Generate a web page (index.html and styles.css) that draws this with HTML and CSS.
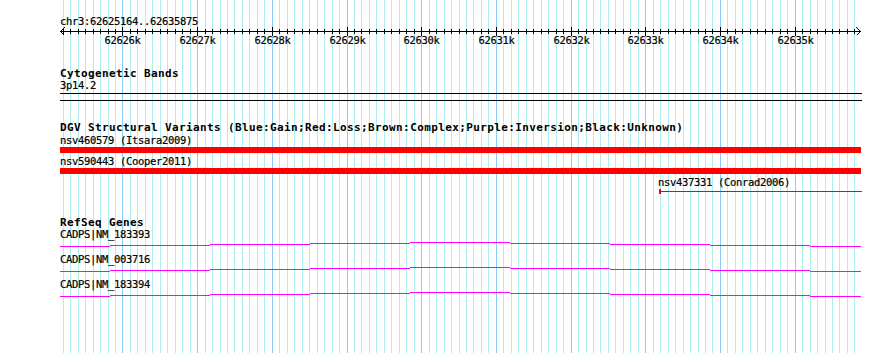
FILE: index.html
```html
<!DOCTYPE html>
<html>
<head>
<meta charset="utf-8">
<link rel="stylesheet" href="styles.css">
</head>
<body>
<div class="panel">
  <svg class="grid" width="890" height="353" shape-rendering="crispEdges">
    <path class="grid-minor" d="M63.5 0V353M70.5 0V353M78.5 0V353M85.5 0V353M93.5 0V353M100.5 0V353M108.5 0V353M115.5 0V353M130.5 0V353M137.5 0V353M145.5 0V353M152.5 0V353M160.5 0V353M167.5 0V353M175.5 0V353M182.5 0V353M190.5 0V353M205.5 0V353M212.5 0V353M220.5 0V353M227.5 0V353M234.5 0V353M242.5 0V353M249.5 0V353M257.5 0V353M264.5 0V353M279.5 0V353M287.5 0V353M294.5 0V353M302.5 0V353M309.5 0V353M317.5 0V353M324.5 0V353M332.5 0V353M339.5 0V353M354.5 0V353M361.5 0V353M369.5 0V353M376.5 0V353M384.5 0V353M391.5 0V353M399.5 0V353M406.5 0V353M414.5 0V353M429.5 0V353M436.5 0V353M444.5 0V353M451.5 0V353M459.5 0V353M466.5 0V353M473.5 0V353M481.5 0V353M488.5 0V353M503.5 0V353M511.5 0V353M518.5 0V353M526.5 0V353M533.5 0V353M541.5 0V353M548.5 0V353M556.5 0V353M563.5 0V353M578.5 0V353M586.5 0V353M593.5 0V353M600.5 0V353M608.5 0V353M615.5 0V353M623.5 0V353M630.5 0V353M638.5 0V353M653.5 0V353M660.5 0V353M668.5 0V353M675.5 0V353M683.5 0V353M690.5 0V353M698.5 0V353M705.5 0V353M712.5 0V353M727.5 0V353M735.5 0V353M742.5 0V353M750.5 0V353M757.5 0V353M765.5 0V353M772.5 0V353M780.5 0V353M787.5 0V353M802.5 0V353M810.5 0V353M817.5 0V353M825.5 0V353M832.5 0V353M839.5 0V353M847.5 0V353M854.5 0V353"/>
    <path class="grid-major" d="M122.5 0V353M197.5 0V353M272.5 0V353M347.5 0V353M421.5 0V353M496.5 0V353M571.5 0V353M645.5 0V353M720.5 0V353M795.5 0V353"/>
  </svg>

  <div class="tracks">
    <div class="label scale-label">chr3:62625164..62635875</div>

    <svg class="ruler" width="890" height="41">
      <g shape-rendering="crispEdges" stroke="#000" fill="none">
        <path d="M60 5.5H861"/>
        <path d="M63.5 3v5M70.5 3v5M78.5 3v5M85.5 3v5M93.5 3v5M100.5 3v5M108.5 3v5M115.5 3v5M130.5 3v5M137.5 3v5M145.5 3v5M152.5 3v5M160.5 3v5M167.5 3v5M175.5 3v5M182.5 3v5M190.5 3v5M205.5 3v5M212.5 3v5M220.5 3v5M227.5 3v5M234.5 3v5M242.5 3v5M249.5 3v5M257.5 3v5M264.5 3v5M279.5 3v5M287.5 3v5M294.5 3v5M302.5 3v5M309.5 3v5M317.5 3v5M324.5 3v5M332.5 3v5M339.5 3v5M354.5 3v5M361.5 3v5M369.5 3v5M376.5 3v5M384.5 3v5M391.5 3v5M399.5 3v5M406.5 3v5M414.5 3v5M429.5 3v5M436.5 3v5M444.5 3v5M451.5 3v5M459.5 3v5M466.5 3v5M473.5 3v5M481.5 3v5M488.5 3v5M503.5 3v5M511.5 3v5M518.5 3v5M526.5 3v5M533.5 3v5M541.5 3v5M548.5 3v5M556.5 3v5M563.5 3v5M578.5 3v5M586.5 3v5M593.5 3v5M600.5 3v5M608.5 3v5M615.5 3v5M623.5 3v5M630.5 3v5M638.5 3v5M653.5 3v5M660.5 3v5M668.5 3v5M675.5 3v5M683.5 3v5M690.5 3v5M698.5 3v5M705.5 3v5M712.5 3v5M727.5 3v5M735.5 3v5M742.5 3v5M750.5 3v5M757.5 3v5M765.5 3v5M772.5 3v5M780.5 3v5M787.5 3v5M802.5 3v5M810.5 3v5M817.5 3v5M825.5 3v5M832.5 3v5M839.5 3v5M847.5 3v5M854.5 3v5"/>
        <path d="M122.5 1v9M197.5 1v9M272.5 1v9M347.5 1v9M421.5 1v9M496.5 1v9M571.5 1v9M645.5 1v9M720.5 1v9M795.5 1v9"/>
        <path d="M64.5 1.5L60.5 5.5L64.5 9.5"/>
        <path d="M856.5 1.5L860.5 5.5L856.5 9.5"/>
      </g>
      <g class="ruler-labels" text-anchor="middle">
        <text x="122.5" y="17.5">62626k</text>
        <text x="197.5" y="17.5">62627k</text>
        <text x="272.5" y="17.5">62628k</text>
        <text x="347.5" y="17.5">62629k</text>
        <text x="421.5" y="17.5">62630k</text>
        <text x="496.5" y="17.5">62631k</text>
        <text x="571.5" y="17.5">62632k</text>
        <text x="645.5" y="17.5">62633k</text>
        <text x="720.5" y="17.5">62634k</text>
        <text x="795.5" y="17.5">62635k</text>
      </g>
    </svg>

    <div class="title cyto-title">Cytogenetic Bands</div>
    <div class="label">3p14.2</div>
    <div class="band"></div>

    <div class="title dgv-title">DGV Structural Variants (Blue:Gain;Red:Loss;Brown:Complex;Purple:Inversion;Black:Unknown)</div>
    <div class="label">nsv460579 (Itsara2009)</div>
    <div class="bar"></div>
    <div class="label gap">nsv590443 (Cooper2011)</div>
    <div class="bar"></div>
    <div class="label gap far">nsv437331 (Conrad2006)</div>
    <div class="thin"></div>

    <div class="title refseq-title">RefSeq Genes</div>
    <div class="gene">
      <div class="label">CADPS|NM_183393</div>
      <svg class="gene-line" width="890" height="12" shape-rendering="crispEdges">
        <rect x="60" y="5" width="50" height="1"/><rect x="110" y="4" width="100" height="1"/><rect x="210" y="3" width="100" height="1"/><rect x="310" y="2" width="100" height="1"/><rect x="410" y="1" width="100" height="1"/><rect x="510" y="2" width="100" height="1"/><rect x="610" y="3" width="100" height="1"/><rect x="710" y="4" width="100" height="1"/><rect x="810" y="5" width="51" height="1"/>
      </svg>
    </div>
    <div class="gene">
      <div class="label">CADPS|NM_003716</div>
      <svg class="gene-line" width="890" height="12" shape-rendering="crispEdges">
        <rect x="60" y="5" width="50" height="1"/><rect x="110" y="4" width="100" height="1"/><rect x="210" y="3" width="100" height="1"/><rect x="310" y="2" width="100" height="1"/><rect x="410" y="1" width="100" height="1"/><rect x="510" y="2" width="100" height="1"/><rect x="610" y="3" width="100" height="1"/><rect x="710" y="4" width="100" height="1"/><rect x="810" y="5" width="51" height="1"/>
      </svg>
    </div>
    <div class="gene">
      <div class="label">CADPS|NM_183394</div>
      <svg class="gene-line" width="890" height="12" shape-rendering="crispEdges">
        <rect x="60" y="5" width="50" height="1"/><rect x="110" y="4" width="100" height="1"/><rect x="210" y="3" width="100" height="1"/><rect x="310" y="2" width="100" height="1"/><rect x="410" y="1" width="100" height="1"/><rect x="510" y="2" width="100" height="1"/><rect x="610" y="3" width="100" height="1"/><rect x="710" y="4" width="100" height="1"/><rect x="810" y="5" width="51" height="1"/>
      </svg>
    </div>
  </div>
</div>
</body>
</html>
```

FILE: styles.css
```css
html, body {
  margin: 0;
  padding: 0;
  background: #ffffff;
}

.panel {
  position: relative;
  width: 890px;
  height: 353px;
  overflow: hidden;
  background: #ffffff;
  color: #000000;
  font-family: "DejaVu Sans Mono", "Liberation Mono", monospace;
}

.grid {
  position: absolute;
  left: 0;
  top: 0;
  display: block;
}

.grid-minor {
  stroke: #afeeee;
  stroke-width: 1;
}

.grid-major {
  stroke: #87cefa;
  stroke-width: 1;
}

.tracks {
  position: relative;
  padding-top: 15px;
}

.label {
  height: 13px;
  padding-left: 60px;
  font-size: 10.5px;
  line-height: 13px;
  letter-spacing: -0.32px;
  white-space: nowrap;
  -webkit-text-stroke: 0.2px #000000;
}

.scale-label {
  height: 11px;
}

.ruler {
  display: block;
  height: 41px;
}

.ruler-labels {
  font-family: "DejaVu Sans Mono", "Liberation Mono", monospace;
  font-size: 10.5px;
  letter-spacing: -0.32px;
  fill: #000000;
  stroke: #000000;
  stroke-width: 0.2px;
}

.title {
  height: 12px;
  padding-left: 60px;
  font-size: 11px;
  font-weight: bold;
  line-height: 13px;
  letter-spacing: 0.38px;
  white-space: nowrap;
}

.band {
  box-sizing: border-box;
  width: 802px;
  height: 8px;
  margin: 1px 0 0 60px;
  border-top: 1px solid #000000;
  border-bottom: 1px solid #000000;
}

.dgv-title {
  height: 13px;
  margin-top: 20px;
}

.bar {
  width: 801px;
  height: 6px;
  margin-left: 60px;
  background: #ff0000;
}

.gap {
  margin-top: 2px;
}

.far {
  padding-left: 658px;
}

.thin {
  box-sizing: border-box;
  width: 203px;
  height: 5px;
  margin-left: 659px;
  border-left: 2px solid #ff0000;
  background: linear-gradient(#ff0000, #ff0000) 0 2px / 100% 1px no-repeat;
}

.refseq-title {
  margin-top: 22px;
}

.gene-line {
  display: block;
  fill: #ff00ff;
}
```
